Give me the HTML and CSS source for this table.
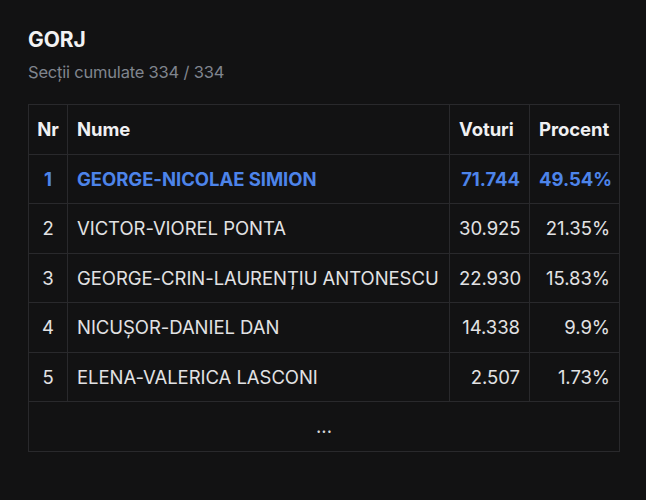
FILE: index.html
```html
<!DOCTYPE html>
<html lang="ro">
<head>
<meta charset="utf-8">
<link rel="stylesheet" href="styles.css">
</head>
<body>
<div class="page">
  <h1 class="title">GORJ</h1>
  <div class="subtitle">Secții cumulate 334 / 334</div>
  <table class="results">
    <colgroup>
      <col class="c-nr">
      <col class="c-name">
      <col class="c-votes">
      <col class="c-pct">
    </colgroup>
    <thead>
      <tr>
        <th class="nr">Nr</th>
        <th>Nume</th>
        <th>Voturi</th>
        <th>Procent</th>
      </tr>
    </thead>
    <tbody>
      <tr class="lead">
        <td class="nr">1</td>
        <td>GEORGE-NICOLAE SIMION</td>
        <td class="num">71.744</td>
        <td class="num">49.54%</td>
      </tr>
      <tr>
        <td class="nr">2</td>
        <td>VICTOR-VIOREL PONTA</td>
        <td class="num">30.925</td>
        <td class="num">21.35%</td>
      </tr>
      <tr>
        <td class="nr">3</td>
        <td>GEORGE-CRIN-LAURENȚIU ANTONESCU</td>
        <td class="num">22.930</td>
        <td class="num">15.83%</td>
      </tr>
      <tr>
        <td class="nr">4</td>
        <td>NICUȘOR-DANIEL DAN</td>
        <td class="num">14.338</td>
        <td class="num">9.9%</td>
      </tr>
      <tr>
        <td class="nr">5</td>
        <td>ELENA-VALERICA LASCONI</td>
        <td class="num">2.507</td>
        <td class="num">1.73%</td>
      </tr>
      <tr>
        <td class="more" colspan="4">...</td>
      </tr>
    </tbody>
  </table>
</div>
</body>
</html>
```

FILE: styles.css
```css
html, body {
  margin: 0;
  background: #121213;
}
body {
  font-family: Inter, "Noto Sans", sans-serif;
  color: #e4e4e6;
}
.page {
  padding: 27px 27px 0 28px;
}
.title {
  margin: 0;
  font-size: 21px;
  font-weight: 700;
  line-height: 26px;
  color: #f2f2f3;
  letter-spacing: -0.1px;
}
.subtitle {
  margin-top: 8px;
  font-size: 16.5px;
  line-height: 22px;
  color: #80858e;
  letter-spacing: -0.2px;
}
.results {
  margin-top: 21px;
  width: 591px;
  table-layout: fixed;
  border-collapse: collapse;
  font-size: 18.5px;
  letter-spacing: -0.05px;
}
.c-nr { width: 39px; }
.c-name { width: 382px; }
.c-votes { width: 80px; }
.c-pct { width: 90px; }
.results th,
.results td {
  border: 1px solid #29292c;
  height: 48.5px;
  padding: 0 9px;
  white-space: nowrap;
  overflow: hidden;
}
.results th {
  font-weight: 700;
  color: #f0f0f2;
  text-align: left;
}
.results .nr {
  padding: 0;
  text-align: center;
}
.results .num {
  text-align: right;
}
.results td {
  color: #e2e2e4;
}
.results .lead td {
  color: #4d84ea;
  font-weight: 700;
}
.results .more {
  text-align: center;
  color: #d8d8da;
}
```
